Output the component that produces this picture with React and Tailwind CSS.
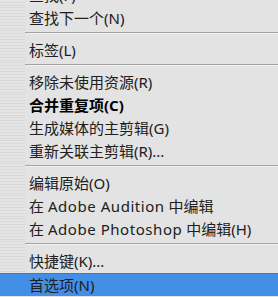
const items = [
  { label: "查找(F)" },
  { label: "查找下一个(N)" },
  { sep: true },
  { label: "标签(L)" },
  { sep: true },
  { label: "移除未使用资源(R)" },
  { label: "合并重复项(C)", bold: true },
  { label: "生成媒体的主剪辑(G)" },
  { label: "重新关联主剪辑(R)..." },
  { sep: true },
  { label: "编辑原始(O)" },
  { pre: "在 ", latin: "Adobe Audition", post: " 中编辑" },
  { pre: "在 ", latin: "Adobe Photoshop", post: " 中编辑(H)" },
  { sep: true },
  { label: "快捷键(K)..." },
  { label: "首选项(N)", active: true },
];

const gutter =
  "w-[25px] shrink-0 bg-[repeating-linear-gradient(to_bottom,#d8d8d8_0px,#d8d8d8_1px,#e4e4e4_1px,#e4e4e4_3px)]";

export default function App() {
  return (
    <div
      className="h-[297px] w-[278px] overflow-hidden bg-[#e3e3e3] text-[15px] text-[#202020]"
      style={{ fontFamily: '"Noto Sans", "Noto Sans CJK SC", sans-serif' }}
    >
      <div className="-mt-[16px] flex flex-col">
        {items.map((item, i) =>
          item.sep ? (
            <div key={i} className="flex h-[9px]">
              <div className={gutter} />
              <div className="flex-1 pt-[2px]">
                <div className="h-px bg-[#a3a3a3]" />
                <div className="h-px bg-[#f2f2f2]" />
              </div>
            </div>
          ) : (
            <div
              key={i}
              className={
                item.active
                  ? "flex h-[23px] border-t border-[#3a7bd0] bg-[#438fe6]"
                  : "flex h-[23px]"
              }
            >
              <div className={item.active ? "w-[25px] shrink-0" : gutter} />
              <div
                className={
                  "whitespace-pre pl-[4px] leading-[22px] " +
                  (item.bold ? "font-bold text-black" : "")
                }
              >
                {item.latin ? (
                  <>
                    {item.pre}
                    <span className="tracking-[0.55px]">{item.latin}</span>
                    {item.post}
                  </>
                ) : (
                  item.label
                )}
              </div>
            </div>
          )
        )}
      </div>
    </div>
  );
}
